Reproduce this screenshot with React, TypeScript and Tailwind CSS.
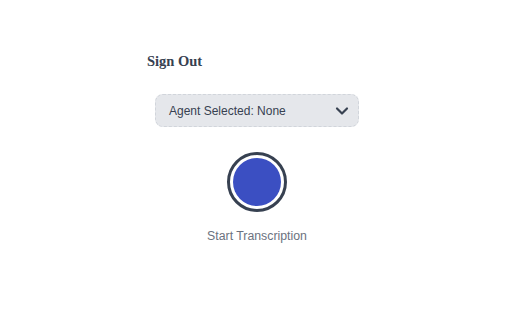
import { ChevronDown } from "lucide-react";

const App = () => {
  return (
    <div className="w-[512px] h-[320px] bg-white">
      <div className="w-[220px] ml-[147px] pt-[52px] flex flex-col">
        <button className="self-start text-left font-bold text-[14.5px] leading-[18px] text-[#374151] font-['Liberation_Serif',serif]">
          Sign Out
        </button>

        <div className="mt-[24px] mx-auto w-[204px] h-[33px] flex items-center justify-between pl-[13px] pr-[6px] rounded-[8px] bg-[#e5e7eb] border border-dashed border-[#d1d5db] font-['Liberation_Sans',Arial,sans-serif]">
          <span className="text-[12px] text-[#374151]">Agent Selected: None</span>
          <ChevronDown className="w-[20px] h-[20px] text-[#374151]" strokeWidth={2.6} />
        </div>

        <div className="mt-[25px] mx-auto w-[60px] h-[60px] rounded-full border-[3px] border-[#374151] p-[3px] bg-white">
          <div className="w-full h-full rounded-full bg-[#3b4fc2]" />
        </div>

        <p className="mt-[16px] text-center text-[12.3px] leading-[16px] text-[#6b7280] font-['Liberation_Sans',Arial,sans-serif]">
          Start Transcription
        </p>
      </div>
    </div>
  );
};

export default App;
